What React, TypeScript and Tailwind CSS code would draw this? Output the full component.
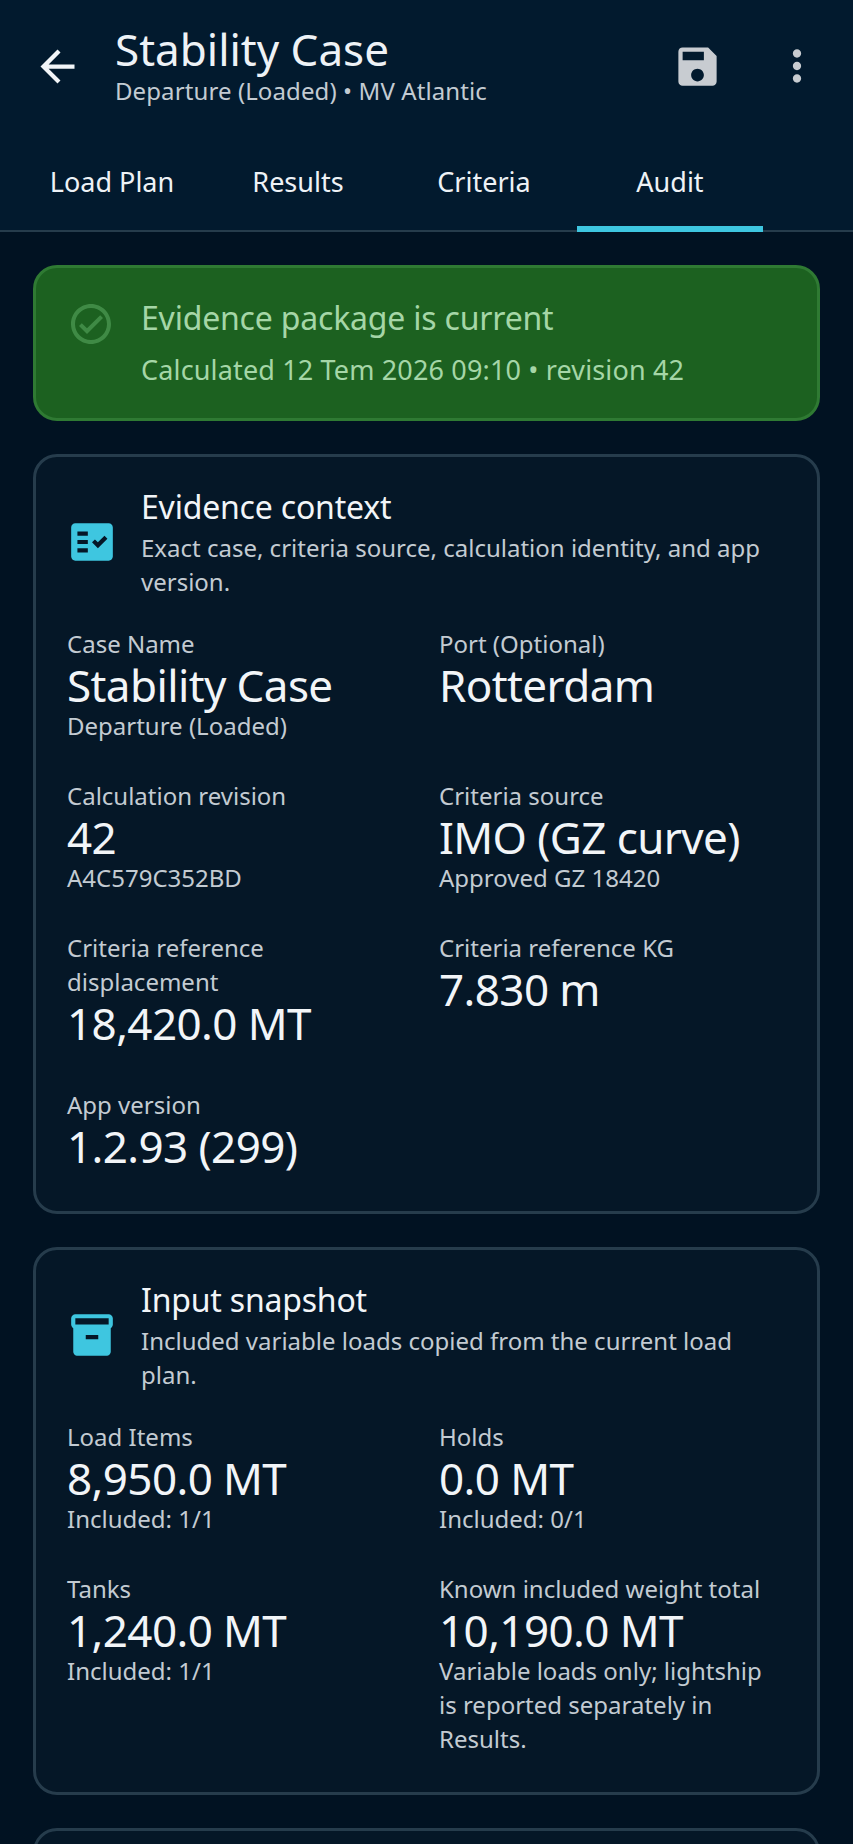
import { MdArrowBack, MdSave, MdMoreVert, MdFactCheck, MdInventory2, MdOutlineCheckCircle } from "react-icons/md";
import type { ReactNode } from "react";

type Metric = {
  label: string;
  value: string;
  note?: string;
};

const tabs = ["Load Plan", "Results", "Criteria", "Audit"];

const contextMetrics: Metric[] = [
  { label: "Case Name", value: "Stability Case", note: "Departure (Loaded)" },
  { label: "Port (Optional)", value: "Rotterdam" },
  { label: "Calculation revision", value: "42", note: "A4C579C352BD" },
  { label: "Criteria source", value: "IMO (GZ curve)", note: "Approved GZ 18420" },
  { label: "Criteria reference displacement", value: "18,420.0 MT" },
  { label: "Criteria reference KG", value: "7.830 m" },
  { label: "App version", value: "1.2.93 (299)" },
];

const snapshotMetrics: Metric[] = [
  { label: "Load Items", value: "8,950.0 MT", note: "Included: 1/1" },
  { label: "Holds", value: "0.0 MT", note: "Included: 0/1" },
  { label: "Tanks", value: "1,240.0 MT", note: "Included: 1/1" },
  {
    label: "Known included weight total",
    value: "10,190.0 MT",
    note: "Variable loads only; lightship is reported separately in Results.",
  },
];

function MetricCell({ label, value, note }: Metric) {
  return (
    <div className="pr-[6px]">
      <p className="text-[24px] leading-[34px] text-[#c3cbd2]">{label}</p>
      <p className="text-[44px] leading-[48px] tracking-[-0.6px] text-[#f2f5f8]">{value}</p>
      {note ? <p className="text-[24px] leading-[34px] text-[#c3cbd2]">{note}</p> : <div className="h-[5px]" />}
    </div>
  );
}

function SectionCard({ icon, title, text, metrics }: { icon: ReactNode; title: string; text: string; metrics: Metric[] }) {
  return (
    <section className="mt-[33px] rounded-[24px] border-[3px] border-[#263c4c] bg-[#051727] px-[31px] pt-[28px] pb-[36px]">
      <div className="flex items-center">
        <div className="w-[74px] shrink-0 text-[#3ec6e0]">{icon}</div>
        <div className="pr-[8px]">
          <h2 className="text-[32px] leading-[44px] tracking-[-0.2px] text-[#f2f5f8]">{title}</h2>
          <p className="mt-[2px] text-[24px] leading-[34px] text-[#c3cbd2]">{text}</p>
        </div>
      </div>
      <div className="mt-[28px] grid grid-cols-2 gap-x-[25px] gap-y-[36px]">
        {metrics.map((metric) => (
          <MetricCell key={metric.label} {...metric} />
        ))}
      </div>
    </section>
  );
}

export default function App() {
  return (
    <div className="h-[1844px] overflow-hidden bg-[#011222] font-['Noto_Sans',sans-serif]">
      <header className="h-[232px] border-b-2 border-[#263c4c] bg-[#021a2e]">
        <div className="flex h-[135px] items-start">
          <MdArrowBack className="ml-[32px] mt-[41px] shrink-0 text-[#f2f5f8]" size={51} />
          <div className="ml-[32px] pt-[23px]">
            <h1 className="text-[44px] leading-[53px] text-[#eef2f6]">Stability Case</h1>
            <p className="text-[24px] leading-[30px] tracking-[0.1px] text-[#c3cbd2]">Departure (Loaded) • MV Atlantic</p>
          </div>
          <MdSave className="ml-auto mt-[41px] shrink-0 text-[#c8ccd1]" size={51} />
          <MdMoreVert className="ml-[49px] mr-[31px] mt-[41px] shrink-0 text-[#c8ccd1]" size={50} />
        </div>
        <nav className="grid h-[95px] grid-cols-[186px_186px_186px_186px] pl-[19px]">
          {tabs.map((tab) => (
            <div key={tab} className="relative flex items-start justify-center pt-[27px]">
              <span className="text-[27px] leading-[40px] text-[#eef2f6]">{tab}</span>
              {tab === "Audit" ? <div className="absolute -bottom-[2px] left-0 right-0 h-[6px] bg-[#3ec6e0]" /> : null}
            </div>
          ))}
        </nav>
      </header>

      <main className="px-[33px] pt-[33px]">
        <div className="flex items-center rounded-[24px] border-[3px] border-[#2f7a33] bg-[#1c6120] py-[28px] pl-[31px]">
          <MdOutlineCheckCircle className="-mt-[38px] shrink-0 text-[#3f8a45]" size={48} />
          <div className="ml-[26px]">
            <p className="text-[32px] leading-[44px] tracking-[-0.2px] text-[#a5d6a7]">Evidence package is current</p>
            <p className="mt-[10px] text-[27px] leading-[40px] tracking-[0.15px] text-[#a5d6a7]">Calculated 12 Tem 2026 09:10 • revision 42</p>
          </div>
        </div>

        <SectionCard
          icon={<MdFactCheck size={50} />}
          title="Evidence context"
          text="Exact case, criteria source, calculation identity, and app version."
          metrics={contextMetrics}
        />
        <SectionCard
          icon={<MdInventory2 size={50} />}
          title="Input snapshot"
          text="Included variable loads copied from the current load plan."
          metrics={snapshotMetrics}
        />
        <section className="mt-[33px] h-[100px] rounded-[24px] border-[3px] border-[#263c4c] bg-[#051727]" />
      </main>
    </div>
  );
}
